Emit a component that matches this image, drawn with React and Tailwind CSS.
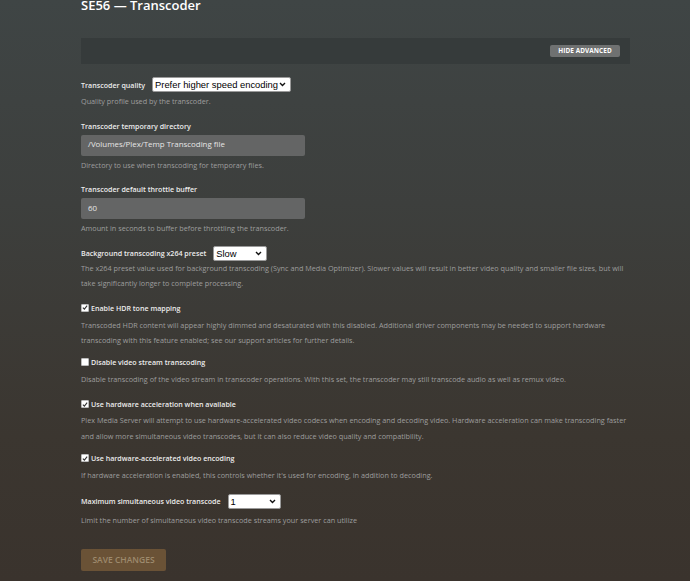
import React from "react";

const font = { fontFamily: '"Open Sans", "Noto Sans", sans-serif' };

function Chevron() {
  return (
    <svg width="7" height="5" viewBox="0 0 7 5" className="shrink-0">
      <path d="M1 1 L3.5 3.5 L6 1" fill="none" stroke="#111" strokeWidth="1.4" />
    </svg>
  );
}

function Select({ value, w }) {
  return (
    <div className={`flex items-center justify-between bg-white border border-[#9a9a9a] rounded-[2px] pl-[2px] pr-[4px] h-[15px] ${w}`}>
      <span
        className="text-[9.4px] leading-[13px] text-black whitespace-nowrap"
        style={{ fontFamily: '"Liberation Sans", Arial, sans-serif' }}
      >
        {value}
      </span>
      <Chevron />
    </div>
  );
}

function Help({ children, mt }) {
  return <div className={`text-[7.25px] leading-[15.5px] text-[#9e9e9e] ${mt}`}>{children}</div>;
}

function Label({ children, mt }) {
  return <div className={`text-[7.1px] leading-[12px] font-semibold text-[#ececec] ${mt}`}>{children}</div>;
}

function Check({ checked, children, mt }) {
  return (
    <div className={`flex items-center gap-[2px] h-[12px] ${mt}`}>
      <div className="w-[8px] h-[8px] bg-white rounded-[1px] flex items-center justify-center border border-[#bbb]">
        {checked && (
          <svg width="7" height="7" viewBox="0 0 7 7">
            <path d="M1 3.6 L2.8 5.4 L6 1.4" fill="none" stroke="#333" strokeWidth="1.3" />
          </svg>
        )}
      </div>
      <span className="text-[7.1px] leading-[12px] font-semibold text-[#ececec]">{children}</span>
    </div>
  );
}

function Input({ value, mt }) {
  return (
    <div className={`w-[224px] h-[21px] bg-[#646565] rounded-[2px] flex items-center pl-[7px] text-[7.9px] text-[#e6e6e6] ${mt}`}>
      {value}
    </div>
  );
}

function RowSelect({ label, value, w, mt }) {
  return (
    <div className={`flex items-center gap-[7px] h-[15px] ${mt}`}>
      <span className="text-[7.1px] leading-[12px] font-semibold text-[#ececec]">{label}</span>
      <Select value={value} w={w} />
    </div>
  );
}

export default function App() {
  return (
    <div
      className="w-[690px] h-[581px] overflow-hidden bg-[linear-gradient(180deg,#3f4545_0%,#3d3f3d_35%,#3b3630_75%,#3a332d_100%)]"
      style={font}
    >
      <div className="ml-[81px] w-[552px]">
        <div className="mt-[-4px] text-[13px] leading-[18px] font-semibold text-white">SE56 — Transcoder</div>
        <div className="mt-[24px] w-[549px] h-[26px] bg-[#363b3b] flex items-center justify-end pr-[10px]">
          <div className="h-[12px] w-[70px] bg-[#6f7171] rounded-[2px] flex items-center justify-center text-[6.4px] font-bold text-white tracking-[0.1px]">
            HIDE ADVANCED
          </div>
        </div>

        <RowSelect mt="mt-[13px]" label="Transcoder quality" value="Prefer higher speed encoding" w="w-[139px]" />
        <Help mt="mt-[2px]">Quality profile used by the transcoder.</Help>

        <Label mt="mt-[10px]">Transcoder temporary directory</Label>
        <Input mt="mt-[3px]" value="/Volumes/Plex/Temp Transcoding file" />
        <Help mt="mt-[2px]">Directory to use when transcoding for temporary files.</Help>

        <Label mt="mt-[10px]">Transcoder default throttle buffer</Label>
        <Input mt="mt-[3px]" value="60" />
        <Help mt="mt-[2px]">Amount in seconds to buffer before throttling the transcoder.</Help>

        <RowSelect mt="mt-[9px]" label="Background transcoding x264 preset" value="Slow" w="w-[54px]" />
        <Help mt="mt-[0px]">
          The x264 preset value used for background transcoding (Sync and Media Optimizer). Slower values will result in better video quality and smaller file sizes, but will take significantly longer to complete processing.
        </Help>

        <Check checked mt="mt-[10px]">Enable HDR tone mapping</Check>
        <Help mt="mt-[4px]">
          Transcoded HDR content will appear highly dimmed and desaturated with this disabled. Additional driver components may be needed to support hardware transcoding with this feature enabled; see our support articles for further details.
        </Help>

        <Check mt="mt-[7px]">Disable video stream transcoding</Check>
        <Help mt="mt-[4px]">
          Disable transcoding of the video stream in transcoder operations. With this set, the transcoder may still transcode audio as well as remux video.
        </Help>

        <Check checked mt="mt-[11px]">Use hardware acceleration when available</Check>
        <Help mt="mt-[3px]">
          Plex Media Server will attempt to use hardware-accelerated video codecs when encoding and decoding video. Hardware acceleration can make transcoding faster and allow more simultaneous video transcodes, but it can also reduce video quality and compatibility.
        </Help>

        <Check checked mt="mt-[8px]">Use hardware-accelerated video encoding</Check>
        <Help mt="mt-[4px]">
          If hardware acceleration is enabled, this controls whether it's used for encoding, in addition to decoding.
        </Help>

        <RowSelect mt="mt-[10px]" label="Maximum simultaneous video transcode" value="1" w="w-[53px]" />
        <Help mt="mt-[4px]">Limit the number of simultaneous video transcode streams your server can utilize</Help>

        <div className="mt-[21px] w-[85px] h-[22px] bg-[#6a5236] rounded-[2px] flex items-center justify-center text-[8.5px] font-semibold text-[#9d8a6d]">
          SAVE CHANGES
        </div>
      </div>
    </div>
  );
}
